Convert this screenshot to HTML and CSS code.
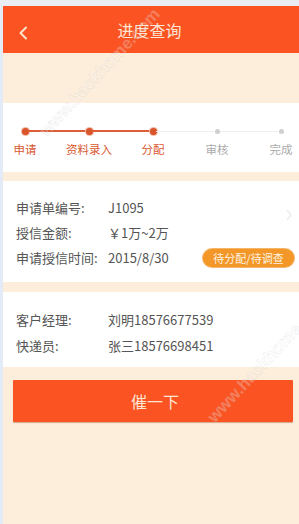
FILE: index.html
```html
<!DOCTYPE html>
<html lang="zh">
<head>
<meta charset="utf-8">
<title>进度查询</title>
<link rel="stylesheet" href="styles.css">
</head>
<body>
<div class="page">
  <header class="topbar">
    <svg class="back" width="10" height="14" viewBox="0 0 10 14"><path d="M8 1.5 L2.5 7 L8 12.5" fill="none" stroke="#fde3cc" stroke-width="2" stroke-linecap="round" stroke-linejoin="round"/></svg>
    <h1 class="title">进度查询</h1>
  </header>
  <div class="spacer"></div>
  <section class="card steps">
    <div class="track">
      <span class="dot on"></span><span class="seg on"></span>
      <span class="dot on"></span><span class="seg on"></span>
      <span class="dot on"></span><span class="seg"></span>
      <span class="dot"></span><span class="seg"></span>
      <span class="dot"></span>
    </div>
    <div class="labels">
      <span class="lbl on">申请</span>
      <span class="lbl on">资料录入</span>
      <span class="lbl on">分配</span>
      <span class="lbl">审核</span>
      <span class="lbl">完成</span>
    </div>
  </section>
  <section class="card info">
    <div class="rows">
      <div class="row"><span class="key">申请单编号:</span><span class="val">J1095</span></div>
      <div class="row"><span class="key">授信金额:</span><span class="val">￥1万~2万</span></div>
      <div class="row"><span class="key">申请授信时间:</span><span class="val">2015/8/30</span><span class="badge">待分配/待调查</span></div>
    </div>
    <svg class="chev" width="6" height="12" viewBox="0 0 6 12"><path d="M1 1 L5 6 L1 11" fill="none" stroke="#e6e6e6" stroke-width="1.2"/></svg>
  </section>
  <section class="card contact">
    <div class="row2"><span class="key">客户经理:</span><span class="val2">刘明18576677539</span></div>
    <div class="row2"><span class="key">快递员:</span><span class="val2">张三18576698451</span></div>
  </section>
  <button class="urge">催一下</button>
  <div class="wm wm1">www.hackhome.com</div>
  <div class="wm wm2">www.hackhome.com</div>
</div>
</body>
</html>
```

FILE: styles.css
```css
html, body {
  margin: 0;
  padding: 0;
}
body {
  width: 299px;
  height: 524px;
  overflow: hidden;
  background: #e9eef4;
  font-family: "Noto Sans CJK SC", "Noto Sans", sans-serif;
}
.page {
  position: relative;
  margin-top: 6px;
  height: 518px;
  background: #fdeedc;
  border-left: 3px solid #e3eaf8;
  display: flex;
  flex-direction: column;
  overflow: hidden;
}
.topbar {
  height: 47px;
  background: #fb5322;
  display: flex;
  align-items: center;
  position: relative;
  justify-content: center;
}
.back {
  position: absolute;
  left: 15px;
  top: 20px;
}
.title {
  margin: 0 0 0 -3px;
  font-size: 16px;
  font-weight: normal;
  color: #fde6d4;
  line-height: 20px;
}
.spacer {
  height: 50px;
}
.card {
  background: #fff;
}
.steps {
  height: 69px;
  display: flex;
  flex-direction: column;
  padding-top: 24px;
  box-sizing: border-box;
}
.track {
  display: flex;
  align-items: center;
  padding: 0 15px 0 19px;
  height: 8px;
}
.dot {
  width: 5px;
  height: 5px;
  border-radius: 50%;
  background: #cfcfcf;
  flex: none;
  margin: 0 0.5px;
}
.dot.on {
  width: 7px;
  height: 7px;
  margin: 0 -0.5px;
  background: #d9532b;
  box-shadow: 0 0 0 1px #f2b9a3;
}
.seg {
  flex: 1;
  height: 1px;
  background: #eeeeee;
}
.seg.on {
  height: 2px;
  background: #dc5d36;
}
.labels {
  display: flex;
  justify-content: space-between;
  padding: 0 15px 0 19px;
  margin-top: 6px;
}
.lbl {
  width: 6px;
  display: flex;
  justify-content: center;
  white-space: nowrap;
  font-size: 11.5px;
  line-height: 16px;
  color: #aaaaaa;
}
.lbl.on {
  color: #d9582f;
}
.info {
  margin-top: 9px;
  height: 101px;
  box-sizing: border-box;
  padding: 14px 0 0 13px;
  display: flex;
  position: relative;
}
.rows {
  display: flex;
  flex-direction: column;
}
.row {
  display: flex;
  align-items: center;
  height: 25px;
}
.key {
  width: 92px;
  font-size: 13px;
  color: #555;
  flex: none;
}
.val {
  font-size: 13px;
  color: #555;
  width: 95px;
  flex: none;
}
.val2 {
  font-size: 13px;
  color: #555;
  white-space: nowrap;
}
.badge {
  width: 91px;
  height: 18px;
  border-radius: 9px;
  background: #f29728;
  color: #fff4e4;
  font-size: 11px;
  line-height: 18px;
  text-align: center;
  box-shadow: 0 0 0 1px #f6b66a;
}
.chev {
  position: absolute;
  right: 7px;
  top: 28px;
}
.contact {
  margin-top: 10px;
  height: 75px;
  box-sizing: border-box;
  padding: 14px 0 0 13px;
  display: flex;
  flex-direction: column;
}
.row2 {
  display: flex;
  align-items: center;
  height: 26px;
}
.urge {
  margin: 13px 6px 0 10px;
  height: 42px;
  border: none;
  border-radius: 1px;
  background: #fb5322;
  color: #fde6d4;
  font-family: "Noto Sans CJK SC", sans-serif;
  font-size: 16px;
  padding: 0 0 0 4px;
  box-shadow: 0 1px 1px rgba(150, 60, 20, 0.4);
}
.wm {
  position: absolute;
  font-family: "Liberation Sans", sans-serif;
  font-size: 17px;
  font-weight: bold;
  color: rgba(255, 255, 255, 0.25);
  -webkit-text-stroke: 0.5px rgba(150, 150, 150, 0.22);
  transform: rotate(-47deg);
  transform-origin: left center;
  white-space: nowrap;
  pointer-events: none;
}
.wm1 {
  left: 40px;
  top: 118px;
}
.wm2 {
  left: 208px;
  top: 404px;
}
```
